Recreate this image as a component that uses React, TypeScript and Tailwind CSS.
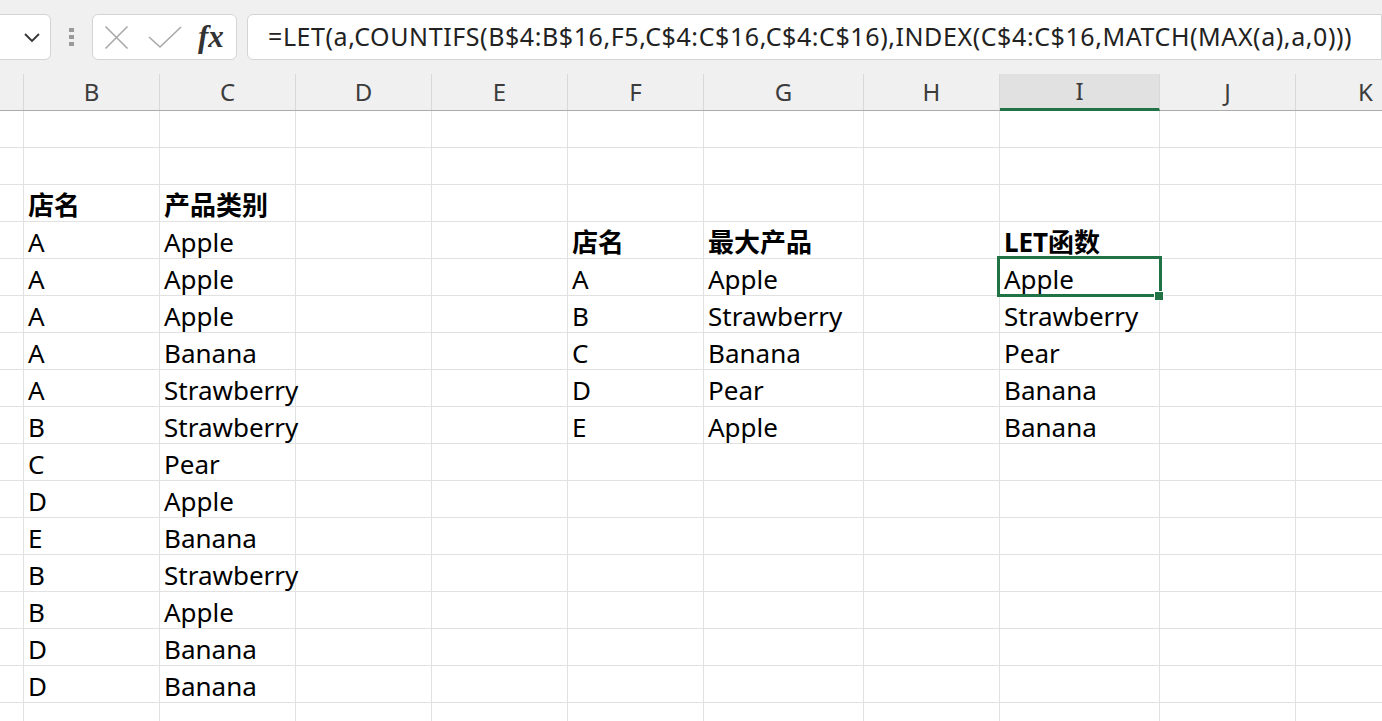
import React from "react";

const font = { fontFamily: '"Noto Sans", "Noto Sans CJK SC", sans-serif' };

const colWidths = [24, 136, 136, 136, 136, 136, 160, 136, 160, 136, 140];
const colLetters = ["", "B", "C", "D", "E", "F", "G", "H", "I", "J", "K"];

// rows 1..17, keyed by column letter
const cells: Record<number, Record<string, { text: string; bold?: boolean }>> = {
  3: { B: { text: "店名", bold: true }, C: { text: "产品类别", bold: true } },
  4: {
    B: { text: "A" },
    C: { text: "Apple" },
    F: { text: "店名", bold: true },
    G: { text: "最大产品", bold: true },
    I: { text: "LET函数", bold: true },
  },
};

const left = [
  ["A", "Apple"],
  ["A", "Apple"],
  ["A", "Banana"],
  ["A", "Strawberry"],
  ["B", "Strawberry"],
  ["C", "Pear"],
  ["D", "Apple"],
  ["E", "Banana"],
  ["B", "Strawberry"],
  ["B", "Apple"],
  ["D", "Banana"],
  ["D", "Banana"],
];
left.forEach(([shop, prod], i) => {
  const r = 5 + i;
  cells[r] = { ...(cells[r] || {}), B: { text: shop }, C: { text: prod } };
});

const right = [
  ["A", "Apple", "Apple"],
  ["B", "Strawberry", "Strawberry"],
  ["C", "Banana", "Pear"],
  ["D", "Pear", "Banana"],
  ["E", "Apple", "Banana"],
];
right.forEach(([shop, max, let_], i) => {
  const r = 5 + i;
  cells[r] = { ...(cells[r] || {}), F: { text: shop }, G: { text: max }, I: { text: let_ } };
});

const rows = Array.from({ length: 17 }, (_, i) => i + 1);

function Toolbar() {
  return (
    <div className="flex items-center h-[74px] bg-[#f0f0f0]">
      <div className="h-[46px] w-[59px] -ml-2 bg-white border border-[#d4d4d4] rounded-md flex items-center justify-end pr-[9px]">
        <svg width="18" height="12" viewBox="0 0 18 12">
          <path d="M2 3 L9 10 L16 3" fill="none" stroke="#333" strokeWidth="1.8" />
        </svg>
      </div>
      <div className="w-[41px] flex flex-col items-center gap-[3px]">
        <div className="w-[5px] h-[4px] bg-[#9a9a9a]" />
        <div className="w-[5px] h-[4px] bg-[#9a9a9a]" />
        <div className="w-[5px] h-[4px] bg-[#9a9a9a]" />
      </div>
      <div className="h-[46px] w-[145px] bg-white border border-[#d4d4d4] rounded-md flex items-center pl-[11px]">
        <svg width="25" height="25" viewBox="0 0 25 25">
          <path d="M1.5 1.5 L23.5 23.5 M23.5 1.5 L1.5 23.5" stroke="#a8a8a8" strokeWidth="1.6" fill="none" />
        </svg>
        <svg width="34" height="24" viewBox="0 0 34 24" className="ml-[19px]">
          <path d="M1 12 L12 22 L33 2" stroke="#a8a8a8" strokeWidth="1.6" fill="none" />
        </svg>
        <span
          className="ml-[16px] -mt-[2px] text-[31px] italic font-bold text-[#333] leading-none"
          style={{ fontFamily: '"Liberation Serif", "DejaVu Serif", serif' }}
        >
          fx
        </span>
      </div>
      <div className="ml-[10px] h-[46px] flex-1 bg-white border border-[#d4d4d4] rounded-l-md flex items-center pl-[20px]">
        <span className="text-[25px] tracking-[0.58px] text-[#222] whitespace-nowrap" style={font}>
          =LET(a,COUNTIFS(B$4:B$16,F5,C$4:C$16,C$4:C$16),INDEX(C$4:C$16,MATCH(MAX(a),a,0)))
        </span>
      </div>
    </div>
  );
}

export default function App() {
  return (
    <div className="w-[1382px] h-[721px] overflow-hidden bg-white relative" style={font}>
      <Toolbar />
      {/* column headers */}
      <div className="flex h-[37px] bg-[#f0f0f0] border-b border-[#ababab]">
        {colLetters.map((c, i) => (
          <div
            key={i}
            style={{ width: colWidths[i] }}
            className={`shrink-0 flex items-center justify-center text-[24px] text-[#3c3c3c] border-r border-[#d9d9d9] ${
              c === "I" ? "bg-[#e1e1e1] border-b-[3px] border-b-[#217346] -mb-px" : ""
            }`}
          >
            {c}
          </div>
        ))}
      </div>
      {/* grid */}
      {rows.map((r) => (
        <div key={r} className="flex h-[37px] border-b border-[#e1e1e1]">
          {colLetters.map((c, i) => {
            const cell = cells[r]?.[c];
            return (
              <div
                key={i}
                style={{ width: colWidths[i] }}
                className={`shrink-0 flex items-end pl-[4px] border-r border-[#e1e1e1] overflow-visible whitespace-nowrap text-[26px] leading-[32px] text-black ${
                  cell?.bold ? "font-bold" : ""
                }`}
              >
                {cell?.text}
              </div>
            );
          })}
        </div>
      ))}
      {/* active cell I5 */}
      <div className="absolute left-[997px] top-[256px] w-[165px] h-[41px] border-[3px] border-[#217346] pointer-events-none" />
      <div className="absolute left-[1154px] top-[291px] w-[10px] h-[10px] bg-[#217346] border border-white" />
    </div>
  );
}
